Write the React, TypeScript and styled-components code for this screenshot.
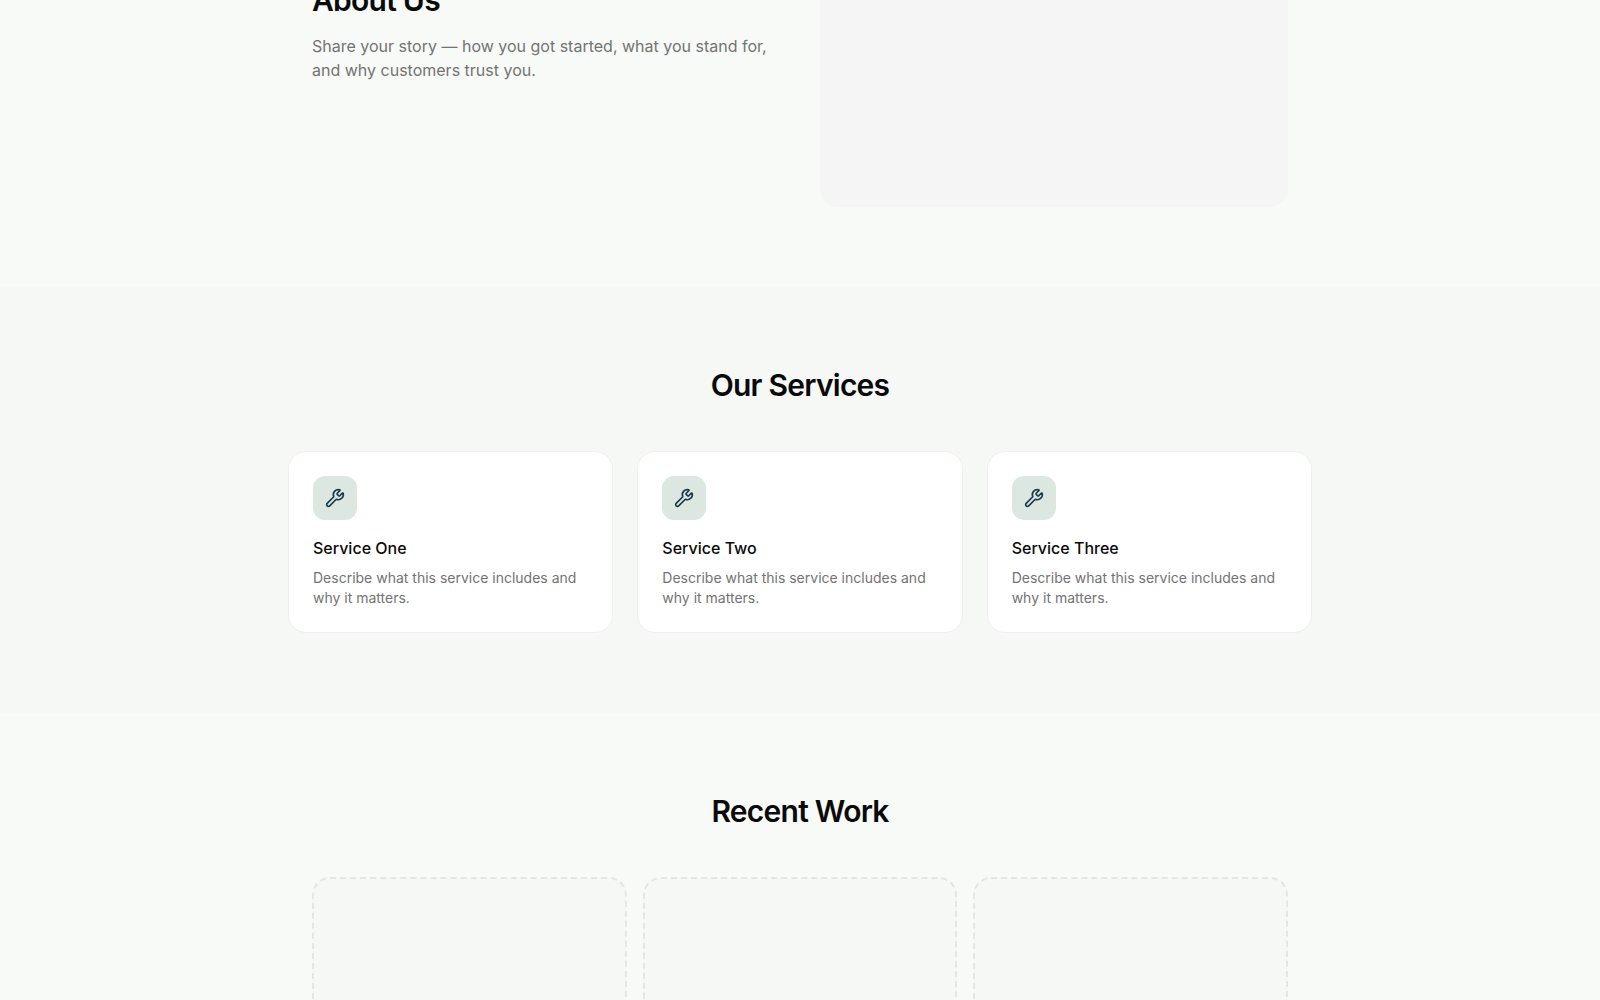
import React from "react";
import styled, { createGlobalStyle } from "styled-components";
import { Wrench } from "lucide-react";

const GlobalStyle = createGlobalStyle`
  *, *::before, *::after { box-sizing: border-box; }
  body {
    margin: 0;
    background: #f8faf7;
    color: #0a0a0a;
    font-family: Inter, "Liberation Sans", sans-serif;
    font-size: 16px;
    line-height: 24px;
  }
  h2, h3, p, ul { margin: 0; padding: 0; }
`;

const Viewport = styled.div`
  height: 100vh;
  overflow: hidden;
`;

const Page = styled.main`
  margin-top: -224px;
`;

const Section = styled.section<{ $tinted?: boolean }>`
  padding: 80px 24px;
  background: ${(p) => (p.$tinted ? "#f6f8f6" : "transparent")};
`;

const Container = styled.div<{ $inset?: boolean }>`
  max-width: 1024px;
  margin: 0 auto;
  padding: 0 ${(p) => (p.$inset ? "24px" : "0")};
`;

const Heading = styled.h2<{ $centered?: boolean }>`
  font-size: 30px;
  line-height: 36px;
  font-weight: 600;
  letter-spacing: -0.025em;
  text-align: ${(p) => (p.$centered ? "center" : "left")};
  margin-bottom: ${(p) => (p.$centered ? "48px" : "16px")};
`;

const AboutGrid = styled.div`
  display: grid;
  grid-template-columns: 1fr 1fr;
  gap: 40px;
  align-items: center;
`;

const Lead = styled.p`
  color: #737373;
`;

const Photo = styled.div`
  aspect-ratio: 4 / 3;
  border-radius: 18px;
  background: #f5f5f5;
`;

const Grid = styled.ul<{ $gap: number }>`
  display: grid;
  grid-template-columns: repeat(3, 1fr);
  gap: ${(p) => p.$gap}px;
  list-style: none;
`;

const ServiceCard = styled.li`
  padding: 24px;
  border: 1px solid #eeefee;
  border-radius: 18px;
  background: #ffffff;
`;

const IconTile = styled.div`
  display: grid;
  place-items: center;
  width: 44px;
  height: 44px;
  margin-bottom: 16px;
  border-radius: 12px;
  background: #dde7e1;
  color: #1a3c4a;
`;

const ServiceName = styled.h3`
  font-size: 16px;
  line-height: 24px;
  font-weight: 500;
  margin-bottom: 8px;
`;

const ServiceText = styled.p`
  font-size: 14px;
  line-height: 20px;
  color: #737373;
`;

const WorkSlot = styled.li`
  aspect-ratio: 4 / 3;
  border: 2px dashed #e5e5e5;
  border-radius: 18px;
  background: #f6f8f6;
`;

const services = ["Service One", "Service Two", "Service Three"];
const workSlots = [1, 2, 3];

export default function App() {
  return (
    <Viewport>
      <GlobalStyle />
      <Page>
        <Section>
          <Container $inset>
            <AboutGrid>
              <div>
                <Heading>About Us</Heading>
                <Lead>
                  Share your story — how you got started, what you stand for, and why customers trust you.
                </Lead>
              </div>
              <Photo />
            </AboutGrid>
          </Container>
        </Section>
        <Section $tinted>
          <Container>
            <Heading $centered>Our Services</Heading>
            <Grid $gap={24}>
              {services.map((name) => (
                <ServiceCard key={name}>
                  <IconTile>
                    <Wrench size={20} aria-hidden />
                  </IconTile>
                  <ServiceName>{name}</ServiceName>
                  <ServiceText>Describe what this service includes and why it matters.</ServiceText>
                </ServiceCard>
              ))}
            </Grid>
          </Container>
        </Section>
        <Section>
          <Container $inset>
            <Heading $centered>Recent Work</Heading>
            <Grid $gap={16}>
              {workSlots.map((slot) => (
                <WorkSlot key={slot} />
              ))}
            </Grid>
          </Container>
        </Section>
      </Page>
    </Viewport>
  );
}
